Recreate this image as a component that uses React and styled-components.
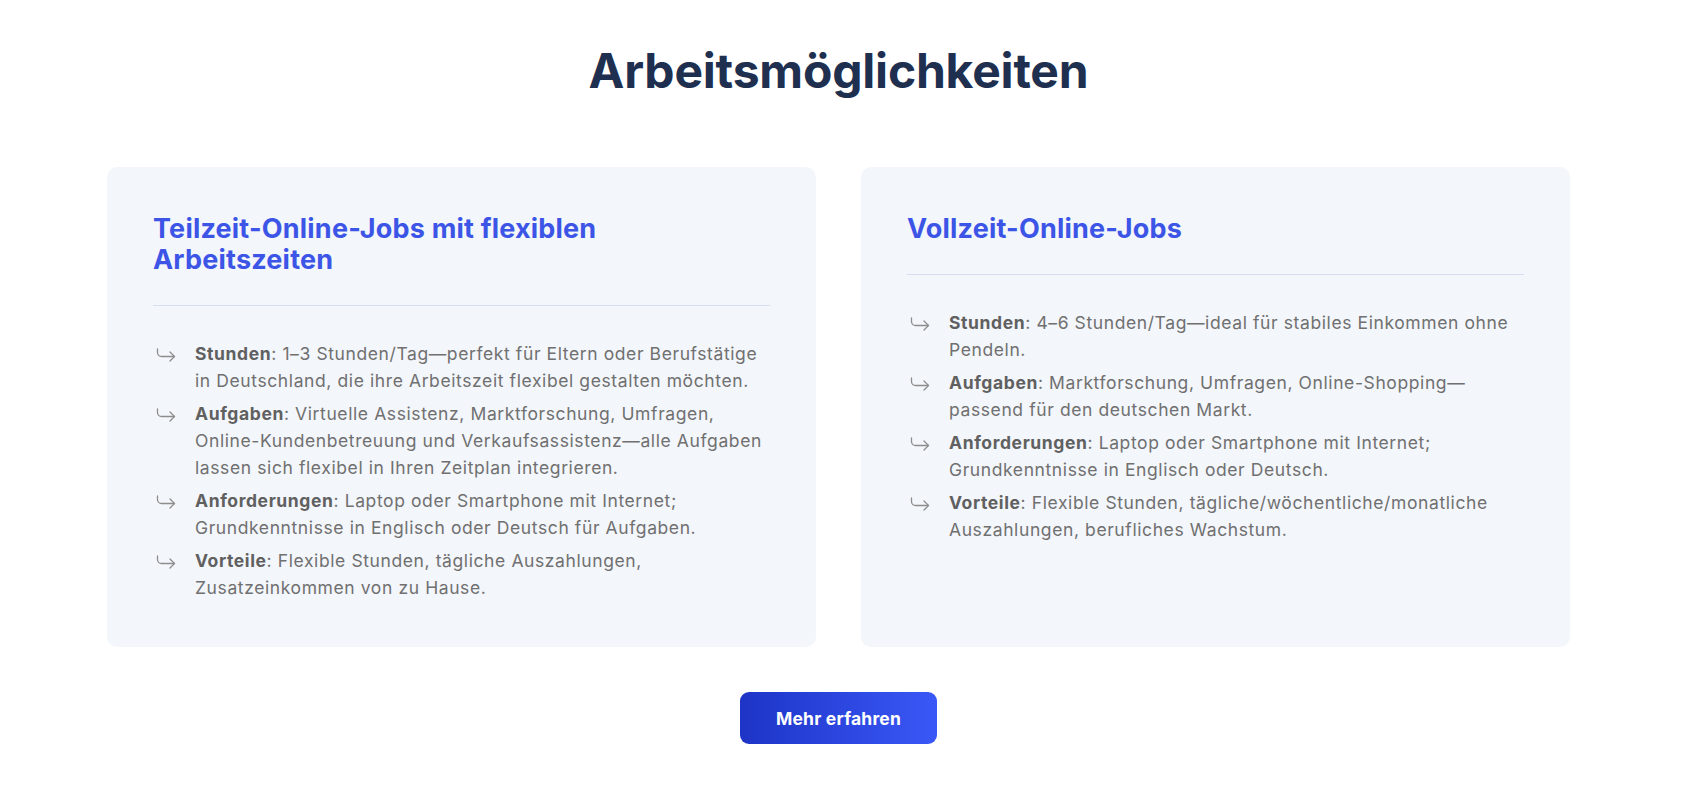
import styled, { createGlobalStyle } from 'styled-components';

const GlobalStyle = createGlobalStyle`
  body {
    margin: 0;
    background: #ffffff;
    font-family: 'Inter', 'Noto Sans', sans-serif;
  }
`;

const Section = styled.section`
  display: flex;
  flex-direction: column;
  align-items: center;
  padding: 40px 14px 40px 0;
`;

const Title = styled.h2`
  margin: 0 0 65px 0;
  font-size: 48px;
  line-height: 62px;
  font-weight: 700;
  letter-spacing: -0.2px;
  color: #1e2f4f;
`;

const CardGrid = styled.div`
  display: grid;
  grid-template-columns: 1fr 1fr;
  gap: 45px;
  width: 1463px;
`;

const Card = styled.div`
  background: #f3f6fb;
  border-radius: 10px;
  padding: 46px;
`;

const CardTitle = styled.h3`
  margin: 0;
  font-size: 27px;
  line-height: 31px;
  font-weight: 700;
  letter-spacing: 0.2px;
  color: #3c55e6;
  max-width: 480px;
`;

const Divider = styled.hr`
  border: none;
  border-top: 1px solid #d6ddf0;
  margin: 30px 0 34px 0;
`;

const List = styled.ul`
  list-style: none;
  margin: 0;
  padding: 0;
  display: flex;
  flex-direction: column;
  gap: 6px;
`;

const Item = styled.li`
  display: flex;
  align-items: flex-start;
  gap: 19px;
  padding-left: 3px;
`;

const Arrow = styled.svg`
  flex: none;
  width: 20px;
  height: 14px;
  margin-top: 8px;
  color: #8d8d8d;
`;

const ItemText = styled.p`
  margin: 0;
  font-size: 17.5px;
  line-height: 27px;
  color: #707070;
  letter-spacing: 0.6px;

  strong {
    font-weight: 700;
    color: #606060;
  }
`;

const Button = styled.button`
  margin-top: 45px;
  width: 197px;
  height: 52px;
  border: none;
  border-radius: 9px;
  background: linear-gradient(90deg, #1d34c6 0%, #3a58f7 100%);
  color: #ffffff;
  font-family: 'Inter', sans-serif;
  font-size: 17.5px;
  font-weight: 700;
  letter-spacing: 0.2px;
  cursor: pointer;
`;

const ArrowIcon = () => (
  <Arrow viewBox="0 0 20 14" fill="none" stroke="currentColor" strokeWidth="1.3" strokeLinecap="round" strokeLinejoin="round">
    <path d="M1.5 1 V4.5 A4 4 0 0 0 5.5 8.5 H18.5" />
    <path d="M14 4 L18.5 8.5 L14 13" />
  </Arrow>
);

const cards = [
  {
    title: 'Teilzeit-Online-Jobs mit flexiblen Arbeitszeiten',
    items: [
      ['Stunden', '1–3 Stunden/Tag—perfekt für Eltern oder Berufstätige in Deutschland, die ihre Arbeitszeit flexibel gestalten möchten.'],
      ['Aufgaben', 'Virtuelle Assistenz, Marktforschung, Umfragen, Online-Kundenbetreuung und Verkaufsassistenz—alle Aufgaben lassen sich flexibel in Ihren Zeitplan integrieren.'],
      ['Anforderungen', 'Laptop oder Smartphone mit Internet; Grundkenntnisse in Englisch oder Deutsch für Aufgaben.'],
      ['Vorteile', 'Flexible Stunden, tägliche Auszahlungen, Zusatzeinkommen von zu Hause.'],
    ],
  },
  {
    title: 'Vollzeit-Online-Jobs',
    items: [
      ['Stunden', '4–6 Stunden/Tag—ideal für stabiles Einkommen ohne Pendeln.'],
      ['Aufgaben', 'Marktforschung, Umfragen, Online-Shopping—passend für den deutschen Markt.'],
      ['Anforderungen', 'Laptop oder Smartphone mit Internet; Grundkenntnisse in Englisch oder Deutsch.'],
      ['Vorteile', 'Flexible Stunden, tägliche/wöchentliche/monatliche Auszahlungen, berufliches Wachstum.'],
    ],
  },
];

const App = () => {
  return (
    <>
      <GlobalStyle />
      <Section>
        <Title>Arbeitsmöglichkeiten</Title>
        <CardGrid>
          {cards.map((card) => (
            <Card key={card.title}>
              <CardTitle>{card.title}</CardTitle>
              <Divider />
              <List>
                {card.items.map(([label, text]) => (
                  <Item key={label}>
                    <ArrowIcon />
                    <ItemText>
                      <strong>{label}</strong>: {text}
                    </ItemText>
                  </Item>
                ))}
              </List>
            </Card>
          ))}
        </CardGrid>
        <Button>Mehr erfahren</Button>
      </Section>
    </>
  );
};

export default App;
